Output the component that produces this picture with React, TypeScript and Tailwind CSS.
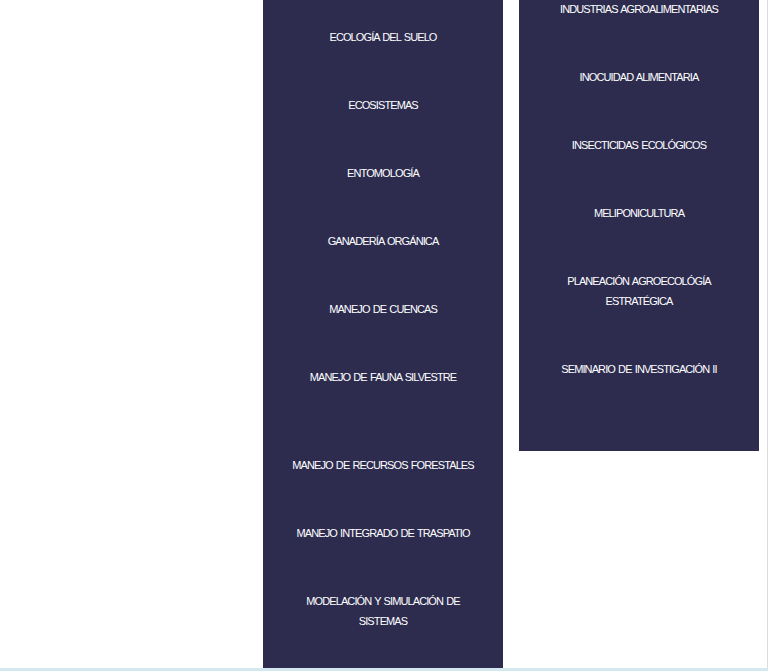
import React from "react";

const left = [
  ["ECOLOGÍA DEL SUELO"],
  ["ECOSISTEMAS"],
  ["ENTOMOLOGÍA"],
  ["GANADERÍA ORGÁNICA"],
  ["MANEJO DE CUENCAS"],
  ["MANEJO DE FAUNA SILVESTRE", ""],
  ["MANEJO DE RECURSOS FORESTALES"],
  ["MANEJO INTEGRADO DE TRASPATIO"],
  ["MODELACIÓN Y SIMULACIÓN DE", "SISTEMAS"],
  [""],
];

const right = [
  ["INDUSTRIAS AGROALIMENTARIAS"],
  ["INOCUIDAD ALIMENTARIA"],
  ["INSECTICIDAS ECOLÓGICOS"],
  ["MELIPONICULTURA"],
  ["PLANEACIÓN AGROECOLÓGÍA", "ESTRATÉGICA"],
  ["SEMINARIO DE INVESTIGACIÓN II"],
];

function Item({ lines }: { lines: string[] }) {
  return (
    <div className="py-6 text-center text-[11px] leading-5 tracking-[-0.9px] [word-spacing:1px] text-white">
      {lines.map((l, i) => (
        <div key={i} className="h-5">
          {l}
        </div>
      ))}
    </div>
  );
}

export default function App() {
  return (
    <div className="flex h-[671px] w-[768px] flex-col bg-white" style={{ fontFamily: '"Liberation Sans", Arial, sans-serif' }}>
      <div className="flex h-[668px] overflow-hidden border-r border-[#dcdcdc]">
        <div className="w-[263px]" />
        <div className="w-[240px] bg-[#2d2c4f] pt-[3px]">
          {left.map((l, i) => (
            <Item key={i} lines={l} />
          ))}
        </div>
        <div className="w-4" />
        <div className="w-[240px] self-start">
          <div className="-mt-[25px] h-[476px] bg-[#2d2c4f]">
            {right.map((l, i) => (
              <Item key={i} lines={l} />
            ))}
          </div>
        </div>
      </div>
      <div className="h-[3px] bg-[#d3e8ef]" />
    </div>
  );
}
